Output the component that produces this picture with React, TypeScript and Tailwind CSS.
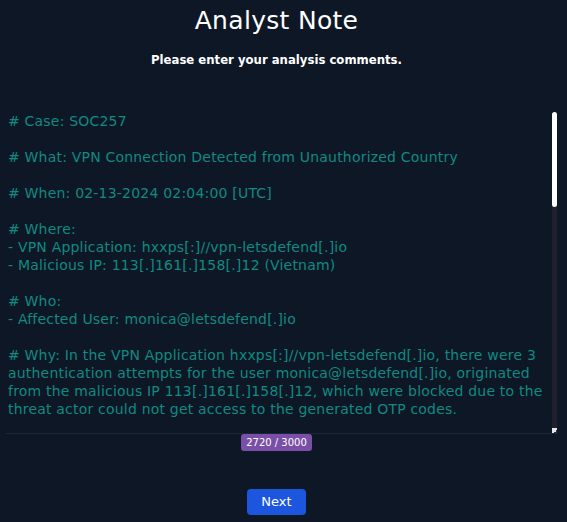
import { useState } from 'react';

// Note text for the analyst textarea
const NOTE = `# Case: SOC257

# What: VPN Connection Detected from Unauthorized Country

# When: 02-13-2024 02:04:00 [UTC]

# Where:
- VPN Application: hxxps[:]//vpn-letsdefend[.]io
- Malicious IP: 113[.]161[.]158[.]12 (Vietnam)

# Who:
- Affected User: monica@letsdefend[.]io

# Why: In the VPN Application hxxps[:]//vpn-letsdefend[.]io, there were 3 authentication attempts for the user monica@letsdefend[.]io, originated from the malicious IP 113[.]161[.]158[.]12, which were blocked due to the threat actor could not get access to the generated OTP codes.

# How: The attacker obtained valid credentials for the user and tried to log in to the VPN from an unauthorized country. The MFA step blocked the attempts.

# Analysis:
- The source IP address is flagged as malicious on VirusTotal and AbuseIPDB.
- Log management shows 3 failed login events from the same address.
- No successful session was established for the user.

# Actions:
- The user password has been reset.
- The malicious IP address was blocked on the firewall.

# Result: True Positive. The attack was not successful thanks to MFA.`;

export default function App() {
    const [note, setNote] = useState(NOTE);

    return (
        <div
            className="min-h-screen bg-[#0e1726] flex flex-col"
            style={{ fontFamily: '"DejaVu Sans", sans-serif' }}
        >
            <div className="w-[553px] flex flex-col items-center">
                <h1 className="mt-[5px] text-[25px] leading-[32px] tracking-[0.3px] text-white">Analyst Note</h1>
                <p className="mt-[15px] text-[11.7px] leading-[16px] font-bold text-white">
                    Please enter your analysis comments.
                </p>
            </div>

            {/* textarea with its own drawn scrollbar */}
            <div className="mt-[43px] ml-[6px] mr-[10px] h-[323px] flex border-b border-[#1c2639]">
                <textarea
                    value={note}
                    onChange={(e) => setNote(e.target.value)}
                    className="flex-1 h-full resize-none overflow-hidden bg-transparent pl-[2px] pr-[2px] pt-[1px] text-[14px] leading-[18px] tracking-[0.2px] text-[#108a82] outline-none"
                />
                <div className="w-[5px] flex flex-col pt-px">
                    <div className="h-[95px] rounded-full bg-white" />
                    <div className="flex-1 bg-[#201f2d]" />
                    <div className="h-[5px] bg-[#e5e7eb] flex items-end justify-end">
                        <div className="w-[3px] h-[3px] border-r border-b border-[#333]" />
                    </div>
                </div>
            </div>

            <div className="w-[553px] flex flex-col items-center">
                <span className="rounded-[3px] bg-[#7a4fa8] px-[5px] text-[10px] leading-[17px] text-white">
                    2720 / 3000
                </span>

                <button className="mt-[38px] h-[26px] w-[59px] rounded-[4px] bg-[#1d56de] text-[13px] text-white">
                    Next
                </button>
            </div>
        </div>
    );
}
